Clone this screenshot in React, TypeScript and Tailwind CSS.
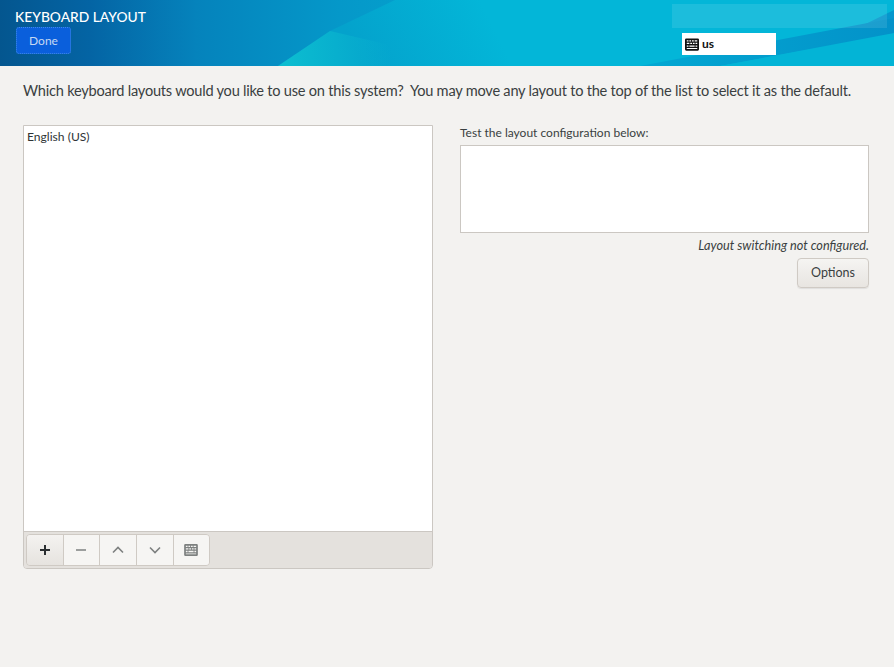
function KeyboardIcon({ className, fill }: { className?: string; fill: string }) {
  return (
    <svg viewBox="0 0 16 14" className={className}>
      <path
        fill={fill}
        fillRule="evenodd"
        d="M1.500 0h13A1.500 1.500 0 0 1 16 1.500v11a1.500 1.500 0 0 1-1.500 1.500h-13A1.500 1.500 0 0 1 0 12.500v-11A1.500 1.500 0 0 1 1.500 0zM2 2v1.500h2V2zm3 0v1.500h2V2zm3 0v1.500h2V2zm3 0v1.500h3V2zM2 5v1.500h3V5zm4 0v1.500h2V5zm3 0v1.500h2V5zm3 0v1.500h2V5zM2 8v1.500h2V8zm3 0v1.500h6V8zm7 0v1.500h2V8zM2 11v1h12v-1z"
      />
    </svg>
  );
}

function HeaderBackground() {
  return (
    <svg className="absolute inset-0 w-full h-full" viewBox="0 0 894 66" preserveAspectRatio="none">
      <defs>
        <linearGradient id="base" x1="0" y1="0" x2="894" y2="0" gradientUnits="userSpaceOnUse">
          <stop offset="0" stopColor="#04568f" />
          <stop offset="0.1" stopColor="#0464a4" />
          <stop offset="0.22" stopColor="#0583bc" />
          <stop offset="0.38" stopColor="#0598c9" />
          <stop offset="0.55" stopColor="#04a6d0" />
          <stop offset="1" stopColor="#0497cd" />
        </linearGradient>
        <linearGradient id="upper" x1="360" y1="60" x2="480" y2="0" gradientUnits="userSpaceOnUse">
          <stop offset="0" stopColor="#04a2cc" />
          <stop offset="1" stopColor="#03b6d8" />
        </linearGradient>
        <linearGradient id="wedge" x1="285" y1="66" x2="390" y2="50" gradientUnits="userSpaceOnUse">
          <stop offset="0" stopColor="#0cbdd0" />
          <stop offset="1" stopColor="#0cbdd0" stopOpacity="0" />
        </linearGradient>
        <linearGradient id="band" x1="650" y1="66" x2="894" y2="30" gradientUnits="userSpaceOnUse">
          <stop offset="0" stopColor="#03a7d2" />
          <stop offset="1" stopColor="#0392c9" />
        </linearGradient>
      </defs>
      <rect width="894" height="66" fill="url(#base)" />
      <polygon points="278,66 330,31 395,0 894,0 894,10 780,66" fill="url(#upper)" />
      <polygon points="278,66 330,31 480,66" fill="url(#wedge)" />
      <polygon points="640,66 894,18 894,34 720,66" fill="url(#band)" />
      <polygon points="720,66 894,33 894,66" fill="#03b4d6" />
    </svg>
  );
}

function ToolButton({ children, active, last }: { children: React.ReactNode; active?: boolean; last?: boolean }) {
  return (
    <button
      className={
        active
          ? "w-[36.67px] h-full flex items-center justify-center border-r border-[#cfcac4] bg-gradient-to-b from-[#f4f2f0] to-[#e6e3df]"
          : last
            ? "w-[35px] h-full flex items-center justify-center bg-[#f6f5f3]"
            : "w-[36.67px] h-full flex items-center justify-center border-r border-[#cfcac4] bg-[#f6f5f3]"
      }
    >
      {children}
    </button>
  );
}

export default function App() {
  return (
    <div className="w-[894px] h-[667px] overflow-hidden bg-[#f3f2f0] text-[#2e3436] font-['Lato','Noto_Sans',sans-serif]">
      <header className="relative h-[66px] flex justify-between">
        <HeaderBackground />
        <div className="relative pl-[15px] pt-[8px]">
          <h1 className="text-[13.8px] leading-[18px] font-medium text-white">KEYBOARD LAYOUT</h1>
          <button className="mt-[1px] ml-[1px] w-[55px] h-[27px] pt-[1px] rounded-[3px] border border-dotted border-[#3f8ae8] bg-[#0a5fdc] text-[12px] text-[#c6d8f2]">
            Done
          </button>
        </div>
        <div className="relative w-[221px] pt-[4px]">
          <div className="h-[24px] w-[215px] ml-[-1px] bg-white/10" />
          <div className="mt-[5px] ml-[9px] w-[94px] h-[22px] bg-white flex items-center pl-[3px] gap-[3px]">
            <KeyboardIcon className="w-[14px] h-[13px]" fill="#111111" />
            <span className="text-[12px] font-bold text-[#111111]">us</span>
          </div>
        </div>
      </header>

      <main className="pl-[23px] pr-[24px]">
        <p className="pt-[14px] h-[59px] text-[14.6px] leading-[21px] tracking-[-0.23px] text-[#3a3f41] whitespace-pre">
          Which keyboard layouts would you like to use on this system?  You may move any layout to the top of the list to select it as the default.
        </p>

        <div className="flex gap-[27px]">
          <div className="w-[410px] h-[444px] flex flex-col border border-[#cbc7c2] rounded-b-[4px] overflow-hidden">
            <div className="flex-1 bg-white pl-[3px] pt-[2px] text-[12.1px] leading-[18px] text-[#2e3436]">English (US)</div>
            <div className="h-[37px] border-t border-[#cbc7c2] bg-[#e4e1dd] px-[2px] py-[2px]">
              <div className="inline-flex h-full rounded-[4px] border border-[#cfcac4] overflow-hidden">
                <ToolButton active>
                  <svg viewBox="0 0 10 10" className="w-[10px] h-[10px]">
                    <path d="M5 0v10M0 5h10" stroke="#2a2e30" strokeWidth="2" />
                  </svg>
                </ToolButton>
                <ToolButton>
                  <svg viewBox="0 0 10 10" className="w-[10px] h-[10px]">
                    <path d="M0 5h10" stroke="#7e8180" strokeWidth="1.600" />
                  </svg>
                </ToolButton>
                <ToolButton>
                  <svg viewBox="0 0 12 8" className="w-[12px] h-[8px]">
                    <path d="M1 6.500l5-5 5 5" fill="none" stroke="#7e8180" strokeWidth="1.600" />
                  </svg>
                </ToolButton>
                <ToolButton>
                  <svg viewBox="0 0 12 8" className="w-[12px] h-[8px]">
                    <path d="M1 1.500l5 5 5-5" fill="none" stroke="#7e8180" strokeWidth="1.600" />
                  </svg>
                </ToolButton>
                <ToolButton last>
                  <KeyboardIcon className="w-[14px] h-[12px]" fill="#7e8180" />
                </ToolButton>
              </div>
            </div>
          </div>

          <div className="w-[409px] flex flex-col">
            <label className="h-[20px] text-[12px] leading-[16px] text-[#3a3f41]">Test the layout configuration below:</label>
            <div className="h-[88px] bg-white border border-[#cbc7c2]" />
            <p className="mt-[3px] h-[22px] text-right text-[12.7px] leading-[18px] italic text-[#3a3f41]">Layout switching not configured.</p>
            <div className="flex justify-end">
              <button className="w-[72px] h-[30px] rounded-[4px] border border-[#cfcac4] bg-gradient-to-b from-[#f5f4f2] to-[#e8e5e1] shadow-[0_1px_1px_rgba(0,0,0,0.08)] text-[12.5px] text-[#3a3f41]">
                Options
              </button>
            </div>
          </div>
        </div>
      </main>
    </div>
  );
}
